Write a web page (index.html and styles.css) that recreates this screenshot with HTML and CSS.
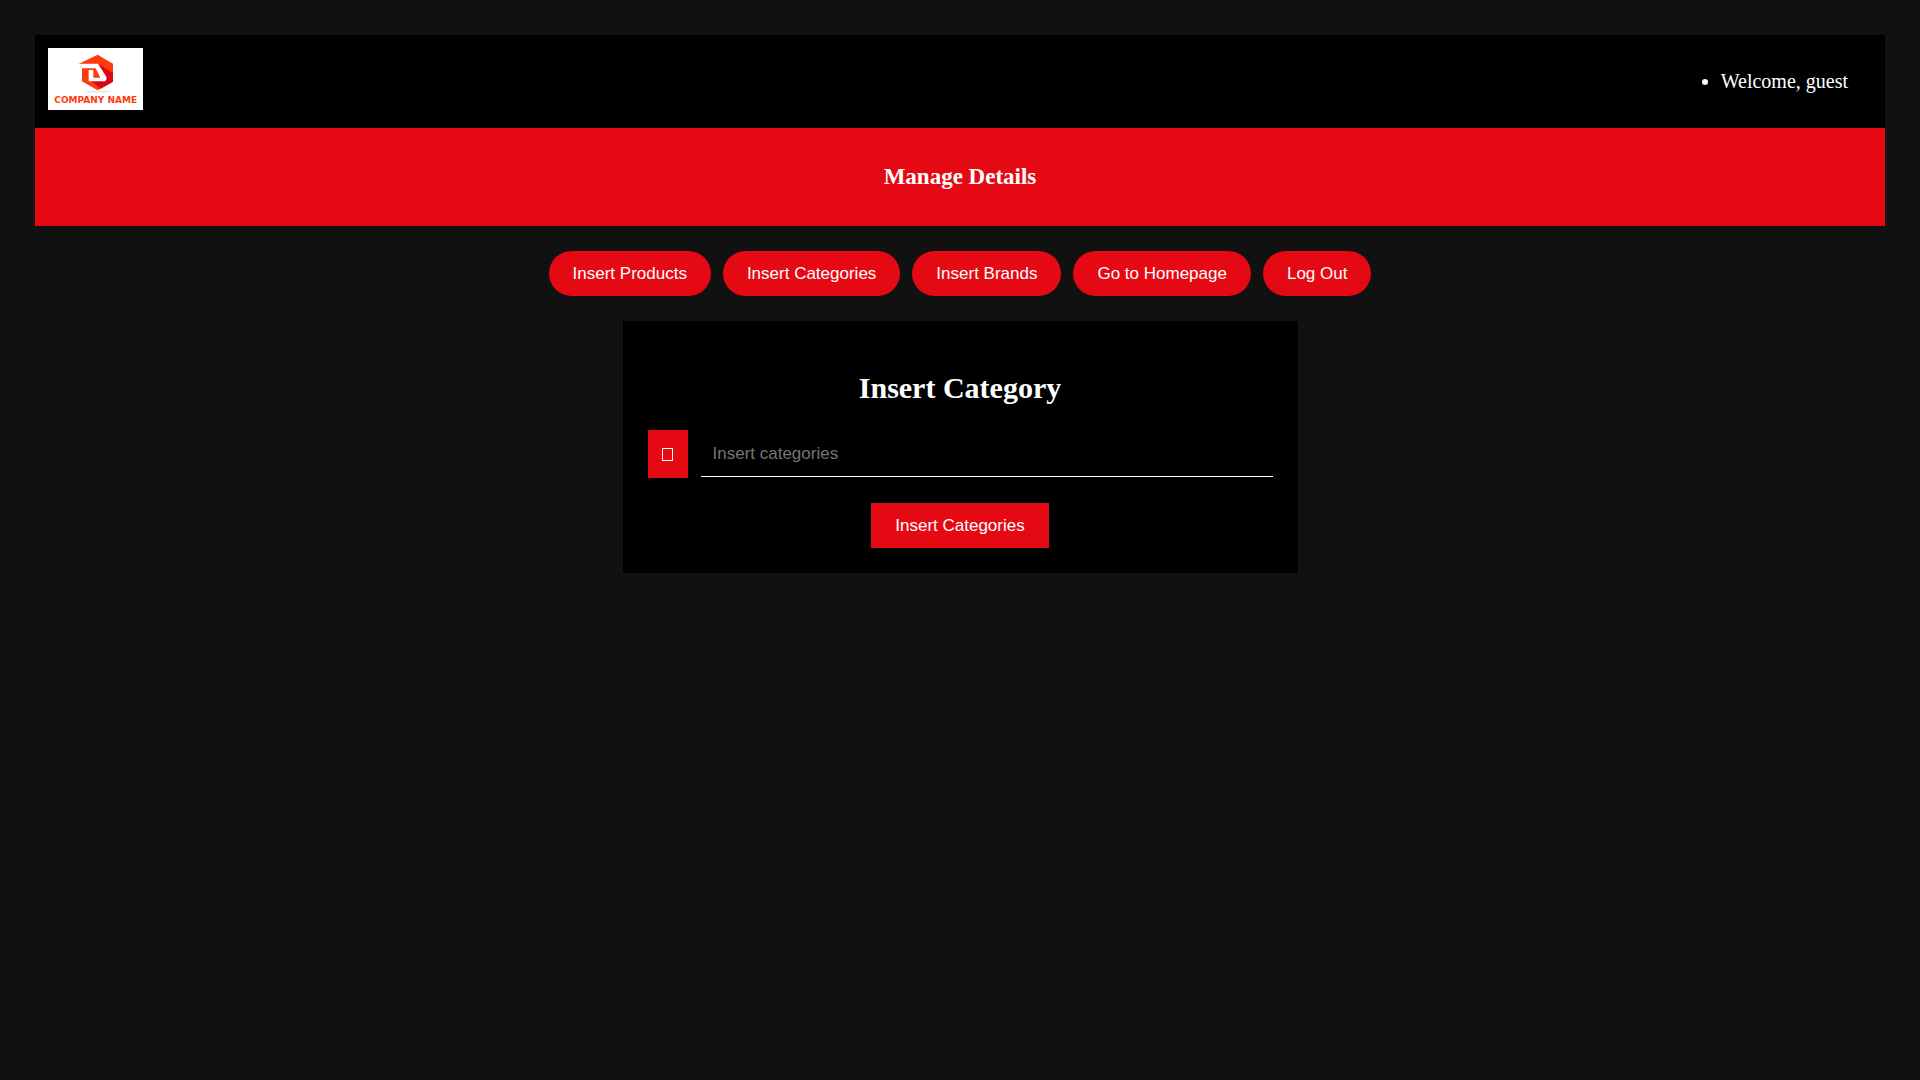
FILE: index.html
```html
<!DOCTYPE html>
<html lang="en">
<head>
<meta charset="utf-8">
<meta name="viewport" content="width=device-width, initial-scale=1">
<title>Admin Dashboard</title>
<link rel="stylesheet" href="styles.css">
</head>
<body>
<header class="topbar">
  <svg class="logo" viewBox="0 0 285 186" role="img" aria-label="Company name">
    <rect width="285" height="186" fill="#fff"/>
    <ellipse cx="149" cy="131" rx="40" ry="2" fill="#dcdcd8"/>
    <path fill="#ff3a0c" d="M93 47 149 20 195 47V101L149 127 102 100V60Z"/>
    <path fill="#dc0714" d="M150 47 195 75V101L158 122 130 99H166Z"/>
    <path fill="#fff" d="M90 47H150L175 86Q178 100 165 100H122V66H136V89H157L143 61H102V58Z"/>
    <text class="logo-text" x="143" y="165" text-anchor="middle">COMPANY NAME</text>
  </svg>
  <ul class="welcome">
    <li>Welcome, guest</li>
  </ul>
</header>
<section class="banner">
  <h3 class="banner-title">Manage Details</h3>
</section>
<nav class="actions">
  <button class="btn btn-pill" type="button">Insert Products</button>
  <button class="btn btn-pill" type="button">Insert Categories</button>
  <button class="btn btn-pill" type="button">Insert Brands</button>
  <button class="btn btn-pill" type="button">Go to Homepage</button>
  <button class="btn btn-pill" type="button">Log Out</button>
</nav>
<main class="card">
  <h2 class="card-title">Insert Category</h2>
  <form class="form">
    <div class="field">
      <label class="field-icon" for="category">
        <svg width="12" height="14" viewBox="0 0 12 14" aria-hidden="true"><rect x=".5" y=".5" width="10" height="12" fill="none" stroke="#fff"/></svg>
      </label>
      <input class="field-input" id="category" type="text" placeholder="Insert categories" aria-label="Insert categories">
    </div>
    <button class="btn" type="submit">Insert Categories</button>
  </form>
</main>
</body>
</html>
```
FILE: styles.css
```css
* {
  box-sizing: border-box;
}

body {
  margin: 0;
  padding: 35px;
  background: #111;
  color: #fff;
  font-family: "Liberation Serif", "Times New Roman", serif;
  font-size: 20px;
}

.topbar {
  display: flex;
  justify-content: space-between;
  align-items: flex-start;
  padding: 13px 37px 18px 13px;
  background: #000;
}

.logo {
  display: block;
  width: 95px;
  height: 62px;
}

.logo-text {
  fill: #ff3a0c;
  font-family: "DejaVu Sans", sans-serif;
  font-size: 27px;
  font-weight: bold;
}

.welcome {
  margin: 0;
  padding: 21px 0 0 50px;
  line-height: 24px;
}

.banner {
  padding: 37px 0;
  background: #e50914;
  text-align: center;
}

.banner-title {
  margin: 0;
  font-size: 23px;
  line-height: 24px;
}

.actions {
  display: flex;
  flex-wrap: wrap;
  justify-content: center;
  gap: 12px;
  padding: 25px 0;
}

.btn {
  padding: 12px 24px;
  border: 0;
  background: #e50914;
  color: #fff;
  font-family: "Liberation Sans", Arial, sans-serif;
  font-size: 17px;
  line-height: 21px;
  cursor: pointer;
}

.btn-pill {
  border-radius: 24px;
}

.card {
  max-width: 675px;
  margin: 0 auto;
  padding: 50px 25px 25px;
  background: #000;
}

.card-title {
  margin: 0 0 25px;
  font-size: 30px;
  line-height: 34px;
  text-align: center;
}

.form {
  display: flex;
  flex-direction: column;
  align-items: center;
  gap: 25px;
}

.field {
  display: flex;
  align-self: stretch;
  gap: 13px;
}

.field-icon {
  display: flex;
  align-items: center;
  justify-content: center;
  width: 40px;
  height: 48px;
  padding-top: 2px;
  background: #e50914;
}

.field-input {
  flex: 1;
  min-width: 0;
  height: 47px;
  padding: 2px 12px 0;
  border: 0;
  border-bottom: 1px solid #fff;
  background: transparent;
  color: #fff;
  font-family: "Liberation Sans", Arial, sans-serif;
  font-size: 17px;
  outline: 0;
}

.field-input::placeholder {
  color: #757575;
}
```
